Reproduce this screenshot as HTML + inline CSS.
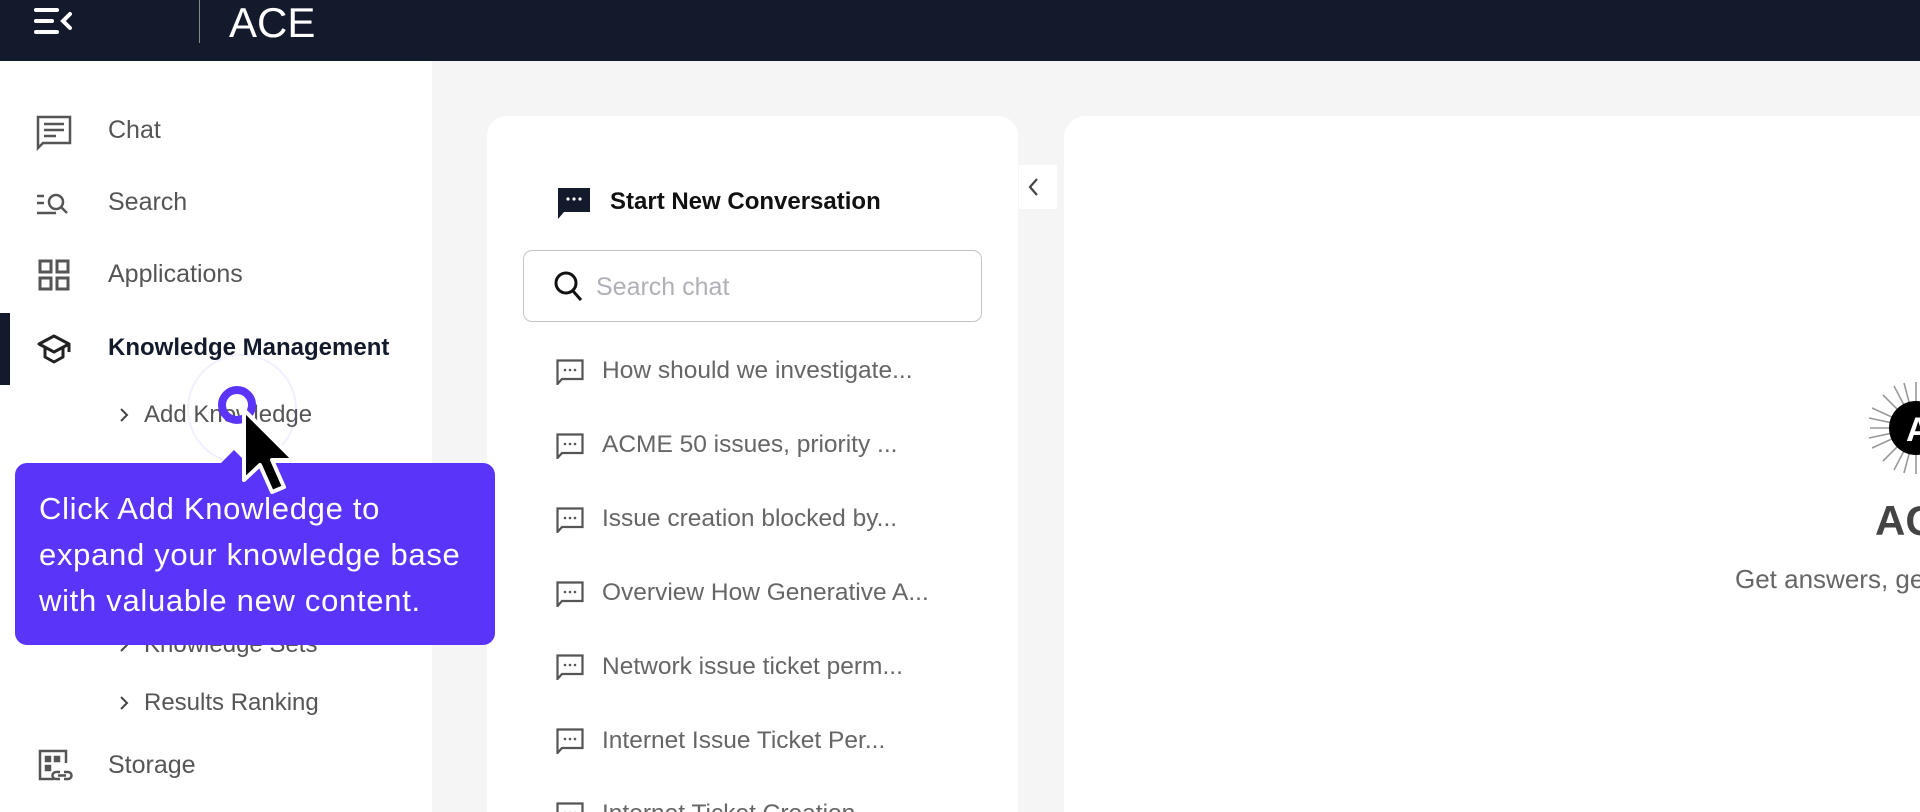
<!DOCTYPE html>
<html style="overflow:hidden;height:812px"><head><meta charset="utf-8"><style>
*{margin:0;padding:0;box-sizing:border-box}
html,body{width:1920px;height:812px;overflow:hidden}
body{background:#f5f5f5;font-family:"Liberation Sans",sans-serif;position:relative}
.a{position:absolute}
.hdr{left:0;top:0;width:1920px;height:61px;background:#131a2b}
.side{left:0;top:61px;width:432px;height:751px;background:#fff}
.nav{left:108px;font-size:25px;color:#555;line-height:30px}
.sub{font-size:24px;color:#555;line-height:30px}
.item{left:602px;font-size:24.5px;color:#666;line-height:30px;white-space:nowrap}
.ic{left:556px;width:28px;height:26px}
</style></head><body>
<div class="a hdr"></div>
<svg class="a" style="left:33px;top:6px" width="42" height="32" viewBox="0 0 42 32"><g stroke="#fff" stroke-width="4" stroke-linecap="round" fill="none"><path d="M3 4H24M3 15H19M3 26H24M37 8L30 15L37 22"/></g></svg>
<div class="a" style="left:199px;top:0;width:1px;height:43px;background:#888"></div>
<div class="a" style="left:229px;top:-2px;font-size:42px;color:#fff;line-height:50px">ACE</div>
<div class="a side"></div>
<div class="a" style="left:0;top:313px;width:10px;height:72px;background:#131a2b"></div>
<svg class="a" style="left:36px;top:115px" width="36" height="36" viewBox="0 0 36 36"><g stroke="#555" stroke-width="2.5" fill="none"><path d="M2 2H34V28H7L2 33Z"/><path d="M8 9H28M8 15H28M8 21H20"/></g></svg>
<svg class="a" style="left:36px;top:188px" width="36" height="30" viewBox="0 0 36 30"><g stroke="#555" stroke-width="2.5" fill="none"><path d="M1 8H8M1 15H8M1 25H20"/><circle cx="20" cy="14" r="7"/><path d="M25 19L31 25"/></g></svg>
<svg class="a" style="left:38px;top:259px" width="32" height="32" viewBox="0 0 32 32"><g stroke="#555" stroke-width="3" fill="none"><rect x="2" y="2" width="11" height="11"/><rect x="19" y="2" width="11" height="11"/><rect x="2" y="19" width="11" height="11"/><rect x="19" y="19" width="11" height="11"/></g></svg>
<svg class="a" style="left:36px;top:333px" width="36" height="32" viewBox="0 0 36 32"><g stroke="#222" stroke-width="3" fill="none" stroke-linejoin="round"><path d="M3 11L18 3L33 11L18 19Z"/><path d="M9 15V24L18 29L27 24V15"/><path d="M33 11V19"/></g></svg>
<svg class="a" style="left:38px;top:749px" width="36" height="36" viewBox="0 0 36 36"><g stroke="#555" stroke-width="2.5" fill="none"><path d="M16 30H2V2H28V14"/><rect x="8" y="8" width="4" height="4" fill="#555"/><rect x="17" y="8" width="4" height="4" fill="#555"/><rect x="8" y="17" width="4" height="4" fill="#555"/><path d="M22 23H18a3.5 3.5 0 0 0 0 7H22M26 23H30a3.5 3.5 0 0 1 0 7H26M20 26.5H28"/></g></svg>
<div class="a nav" style="top:115px">Chat</div>
<div class="a nav" style="top:187px">Search</div>
<div class="a nav" style="top:259px">Applications</div>
<div class="a nav" style="top:333px;color:#131a2b;font-weight:bold;font-size:24px">Knowledge Management</div>
<svg width="0" height="0" style="position:absolute"><defs><symbol id="c" viewBox="0 0 12 20"><path d="M3 4L9 10L3 16" stroke="#444" stroke-width="2" fill="none"/></symbol><symbol id="b" viewBox="0 0 28 26"><path d="M1.5 1.5H26.5V20H6L1.5 25Z" fill="none" stroke="#555" stroke-width="2.2"/><g fill="#555"><circle cx="9" cy="11" r="1.3"/><circle cx="14" cy="11" r="1.3"/><circle cx="19" cy="11" r="1.3"/></g></symbol></defs></svg>
<svg class="a" style="left:118px;top:405px" width="12" height="20"><use href="#c"/></svg><div class="a sub" style="left:144px;top:400px">Add Knowledge</div>
<svg class="a" style="left:118px;top:635px" width="12" height="20"><use href="#c"/></svg><div class="a sub" style="left:144px;top:630px">Knowledge Sets</div>
<svg class="a" style="left:118px;top:693px" width="12" height="20"><use href="#c"/></svg><div class="a sub" style="left:144px;top:688px">Results Ranking</div>
<div class="a nav" style="top:750px">Storage</div>
<div class="a" style="left:487px;top:116px;width:531px;height:720px;background:#fff;border-radius:20px"></div>
<svg class="a" style="left:556px;top:186px" width="36" height="34" viewBox="0 0 36 34"><path d="M2 2H34V26H8L2 33Z" fill="#131a2b"/><g fill="#fff"><circle cx="12" cy="13" r="1.6"/><circle cx="18" cy="13" r="1.6"/><circle cx="24" cy="13" r="1.6"/></g></svg>
<div class="a" style="left:610px;top:187px;font-size:24px;font-weight:bold;color:#111;line-height:30px">Start New Conversation</div>
<div class="a" style="left:523px;top:250px;width:459px;height:72px;border:1.5px solid #c4c4c4;border-radius:9px;background:#fff"></div>
<svg class="a" style="left:553px;top:270px" width="32" height="34" viewBox="0 0 32 34"><g stroke="#111" stroke-width="3" fill="none"><circle cx="13" cy="13" r="10"/><path d="M20 21L28 30"/></g></svg>
<div class="a" style="left:596px;top:272px;font-size:25px;color:#b0b0b8;line-height:30px">Search chat</div>
<svg class="a ic" style="top:359px"><use href="#b"/></svg><div class="a item" style="top:356px">How should we investigate...</div>
<svg class="a ic" style="top:433px"><use href="#b"/></svg><div class="a item" style="top:430px">ACME 50 issues, priority ...</div>
<svg class="a ic" style="top:507px"><use href="#b"/></svg><div class="a item" style="top:504px">Issue creation blocked by...</div>
<svg class="a ic" style="top:581px"><use href="#b"/></svg><div class="a item" style="top:578px">Overview How Generative A...</div>
<svg class="a ic" style="top:654px"><use href="#b"/></svg><div class="a item" style="top:652px">Network issue ticket perm...</div>
<svg class="a ic" style="top:728px"><use href="#b"/></svg><div class="a item" style="top:726px">Internet Issue Ticket Per...</div>
<svg class="a ic" style="top:802px"><use href="#b"/></svg><div class="a item" style="top:799px">Internet Ticket Creation</div>
<div class="a" style="left:1019px;top:165px;width:38px;height:44px;background:#fff"></div>
<svg class="a" style="left:1026px;top:175px" width="16" height="24" viewBox="0 0 16 24"><path d="M11 4L4 12L11 20" stroke="#444" stroke-width="2.2" fill="none"/></svg>
<div class="a" style="left:1064px;top:116px;width:880px;height:720px;background:#fff;border-radius:22px"></div>
<svg class="a" style="left:1866px;top:380px" width="100" height="96" viewBox="0 0 100 96"><g stroke="#999" stroke-width="1.6"><path d="M50 2V94M4 48H96M17 15L83 81M17 81L83 15M28 6L72 90M6 28L94 68M6 68L94 28M28 90L72 6M38 3L62 93M3 38L97 58M3 58L97 38M38 93L62 3"/></g><circle cx="50" cy="48" r="22" fill="none" stroke="#888" stroke-width="8"/><circle cx="50" cy="48" r="27" fill="#000"/><text x="40" y="61" font-family="Liberation Sans" font-weight="bold" font-size="34" fill="#fff">A</text></svg>
<div class="a" style="left:1875px;top:496px;font-size:42px;font-weight:bold;color:#444;line-height:50px">ACE</div>
<div class="a" style="left:1735px;top:564px;font-size:26px;color:#666;line-height:30px;white-space:nowrap">Get answers, generate</div>
<div class="a" style="left:187px;top:354px;width:110px;height:110px;border-radius:50%;border:2px solid rgba(91,52,249,0.08)"></div>
<div class="a" style="left:15px;top:463px;width:480px;height:182px;background:#5b34f9;border-radius:12px"></div>
<div class="a" style="left:220px;top:450px;width:0;height:0;border-left:14px solid transparent;border-right:14px solid transparent;border-bottom:14px solid #5b34f9"></div>
<div class="a" style="left:39px;top:486px;font-size:31px;letter-spacing:0.7px;line-height:46px;color:#fff;width:470px;white-space:nowrap">Click Add Knowledge to<br>expand your knowledge base<br>with valuable new content.</div>
<div class="a" style="left:218px;top:386px;width:38px;height:38px;border-radius:50%;border:8px solid #5b34f9"></div>
<svg class="a" style="left:240px;top:408px" width="60" height="92" viewBox="0 0 60 92"><path d="M4 2L4 72L20 57L32 84L44 79L32 52L54 52Z" fill="#000" stroke="#fff" stroke-width="4" stroke-linejoin="round"/></svg>
</body></html>
